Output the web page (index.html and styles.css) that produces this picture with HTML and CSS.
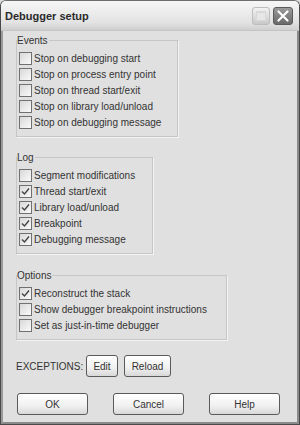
FILE: index.html
```html
<!DOCTYPE html>
<html>
<head>
<meta charset="utf-8">
<link rel="stylesheet" href="styles.css">
</head>
<body>
<div class="window">
  <div class="titlebar">
    <span class="title">Debugger setup</span>
    <div class="tbtns">
      <span class="tbtn max"><span class="maxbox"></span></span>
      <span class="tbtn close">
        <svg width="12" height="12" viewBox="0 0 12 12"><path d="M1.5 1.5 L10.5 10.5 M10.5 1.5 L1.5 10.5" stroke="#fff" stroke-width="2.2" stroke-linecap="round"/></svg>
      </span>
    </div>
  </div>
  <div class="client">
    <div class="group g-events">
      <span class="legend">Events</span>
      <ul class="rows">
        <li><span class="cb"></span>Stop on debugging start</li>
        <li><span class="cb"></span>Stop on process entry point</li>
        <li><span class="cb"></span>Stop on thread start/exit</li>
        <li><span class="cb"></span>Stop on library load/unload</li>
        <li><span class="cb"></span>Stop on debugging message</li>
      </ul>
    </div>
    <div class="group g-log">
      <span class="legend">Log</span>
      <ul class="rows">
        <li><span class="cb"></span>Segment modifications</li>
        <li><span class="cb on"><svg width="9" height="9" viewBox="0 0 9 9"><path d="M1 4.5 L3.5 7 L8 1.5" fill="none" stroke="#444" stroke-width="1.4"/></svg></span>Thread start/exit</li>
        <li><span class="cb on"><svg width="9" height="9" viewBox="0 0 9 9"><path d="M1 4.5 L3.5 7 L8 1.5" fill="none" stroke="#444" stroke-width="1.4"/></svg></span>Library load/unload</li>
        <li><span class="cb on"><svg width="9" height="9" viewBox="0 0 9 9"><path d="M1 4.5 L3.5 7 L8 1.5" fill="none" stroke="#444" stroke-width="1.4"/></svg></span>Breakpoint</li>
        <li><span class="cb on"><svg width="9" height="9" viewBox="0 0 9 9"><path d="M1 4.5 L3.5 7 L8 1.5" fill="none" stroke="#444" stroke-width="1.4"/></svg></span>Debugging message</li>
      </ul>
    </div>
    <div class="group g-options">
      <span class="legend">Options</span>
      <ul class="rows">
        <li><span class="cb on"><svg width="9" height="9" viewBox="0 0 9 9"><path d="M1 4.5 L3.5 7 L8 1.5" fill="none" stroke="#444" stroke-width="1.4"/></svg></span>Reconstruct the stack</li>
        <li><span class="cb"></span>Show debugger breakpoint instructions</li>
        <li><span class="cb"></span>Set as just-in-time debugger</li>
      </ul>
    </div>
    <div class="exc">
      <span class="exc-label">EXCEPTIONS:</span>
      <button class="btn b-edit">Edit</button>
      <button class="btn b-reload">Reload</button>
    </div>
    <div class="actions">
      <button class="btn b-main">OK</button>
      <button class="btn b-main">Cancel</button>
      <button class="btn b-main">Help</button>
    </div>
  </div>
</div>
</body>
</html>
```

FILE: styles.css
```css
html, body {
  margin: 0;
  padding: 0;
  background: #dcdcdc;
}
.window {
  width: 300px;
  height: 425px;
  box-sizing: border-box;
  display: flex;
  flex-direction: column;
  background: #e0e0e0;
  border: 1px solid #4a4a4a;
  border-top-color: #6e6e6e;
  border-radius: 6px 6px 0 0;
  font-family: "Liberation Sans", Arial, sans-serif;
  font-size: 10px;
  color: #333;
  overflow: hidden;
}
.titlebar {
  height: 29px;
  flex: none;
  display: flex;
  align-items: center;
  justify-content: space-between;
  padding: 0 6px 0 4px;
  background: linear-gradient(#f6f6f6 0%, #ececec 40%, #e2e2e2 75%, #cfcfcf 100%);
  border-bottom: 1px solid #c4c4c4;
}
.title {
  font-weight: bold;
  font-size: 11px;
  color: #2a2a2a;
}
.tbtns {
  display: flex;
  gap: 3px;
  align-items: center;
}
.tbtn {
  width: 18px;
  height: 18px;
  border-radius: 3px;
  display: flex;
  align-items: center;
  justify-content: center;
  box-sizing: border-box;
}
.max {
  background: linear-gradient(#f2f2f2, #c9c9c9);
  border: 1px solid #bdbdbd;
}
.maxbox {
  width: 8px;
  height: 7px;
  border: 1px solid #d8d8d8;
  border-top-width: 2px;
  background: #e6e6e6;
}
.close {
  width: 20px;
  background: linear-gradient(#9a9a9a, #6a6a6a);
  border: 1px solid #5a5a5a;
}
.client {
  flex: 1;
  display: flex;
  flex-direction: column;
  border-left: 2px solid #9a9a9a;
  border-right: 2px solid #8a8a8a;
  border-bottom: 2px solid #8a8a8a;
  padding: 0 0 0 13px;
}
.group {
  border: 1px solid #c6c6c6;
  box-shadow: 1px 1px 0 #f4f4f4;
  display: flex;
  flex-direction: column;
  padding: 0 2px 6px 2px;
}
.g-events { margin-top: 9px; width: 162px; box-sizing: border-box; }
.g-log { margin-top: 20px; width: 137px; box-sizing: border-box; }
.g-options { margin-top: 21px; width: 211px; box-sizing: border-box; }
.legend {
  align-self: flex-start;
  margin: -7px 0 0 -2px;
  padding: 0 1px 0 0;
  line-height: 13px;
  background: #e0e0e0;
  color: #333;
}
.rows {
  list-style: none;
  margin: 3px 0 0 0;
  padding: 0;
}
.rows li {
  height: 16px;
  display: flex;
  align-items: center;
  white-space: nowrap;
}
.cb {
  width: 13px;
  height: 13px;
  box-sizing: border-box;
  border: 1px solid #707070;
  background: linear-gradient(135deg, #d8d8d8, #fafafa);
  margin-right: 2px;
  display: flex;
  align-items: center;
  justify-content: center;
  flex: none;
}
.exc {
  margin-top: 15px;
  display: flex;
  align-items: center;
  height: 22px;
}
.exc-label {
  width: 70px;
  flex: none;
}
.btn {
  font-family: "Liberation Sans", Arial, sans-serif;
  font-size: 10px;
  color: #333;
  height: 22px;
  box-sizing: border-box;
  border: 1px solid #5a5a5a;
  border-radius: 3px;
  background: linear-gradient(#ffffff, #f0f0f0 60%, #d8d8d8);
  padding: 0;
  margin: 0;
}
.b-edit { width: 32px; margin-right: 6px; }
.b-reload { width: 47px; }
.actions {
  margin-top: 16px;
  display: flex;
  gap: 25px;
  padding-left: 1px;
}
.b-main { width: 71px; }
```
